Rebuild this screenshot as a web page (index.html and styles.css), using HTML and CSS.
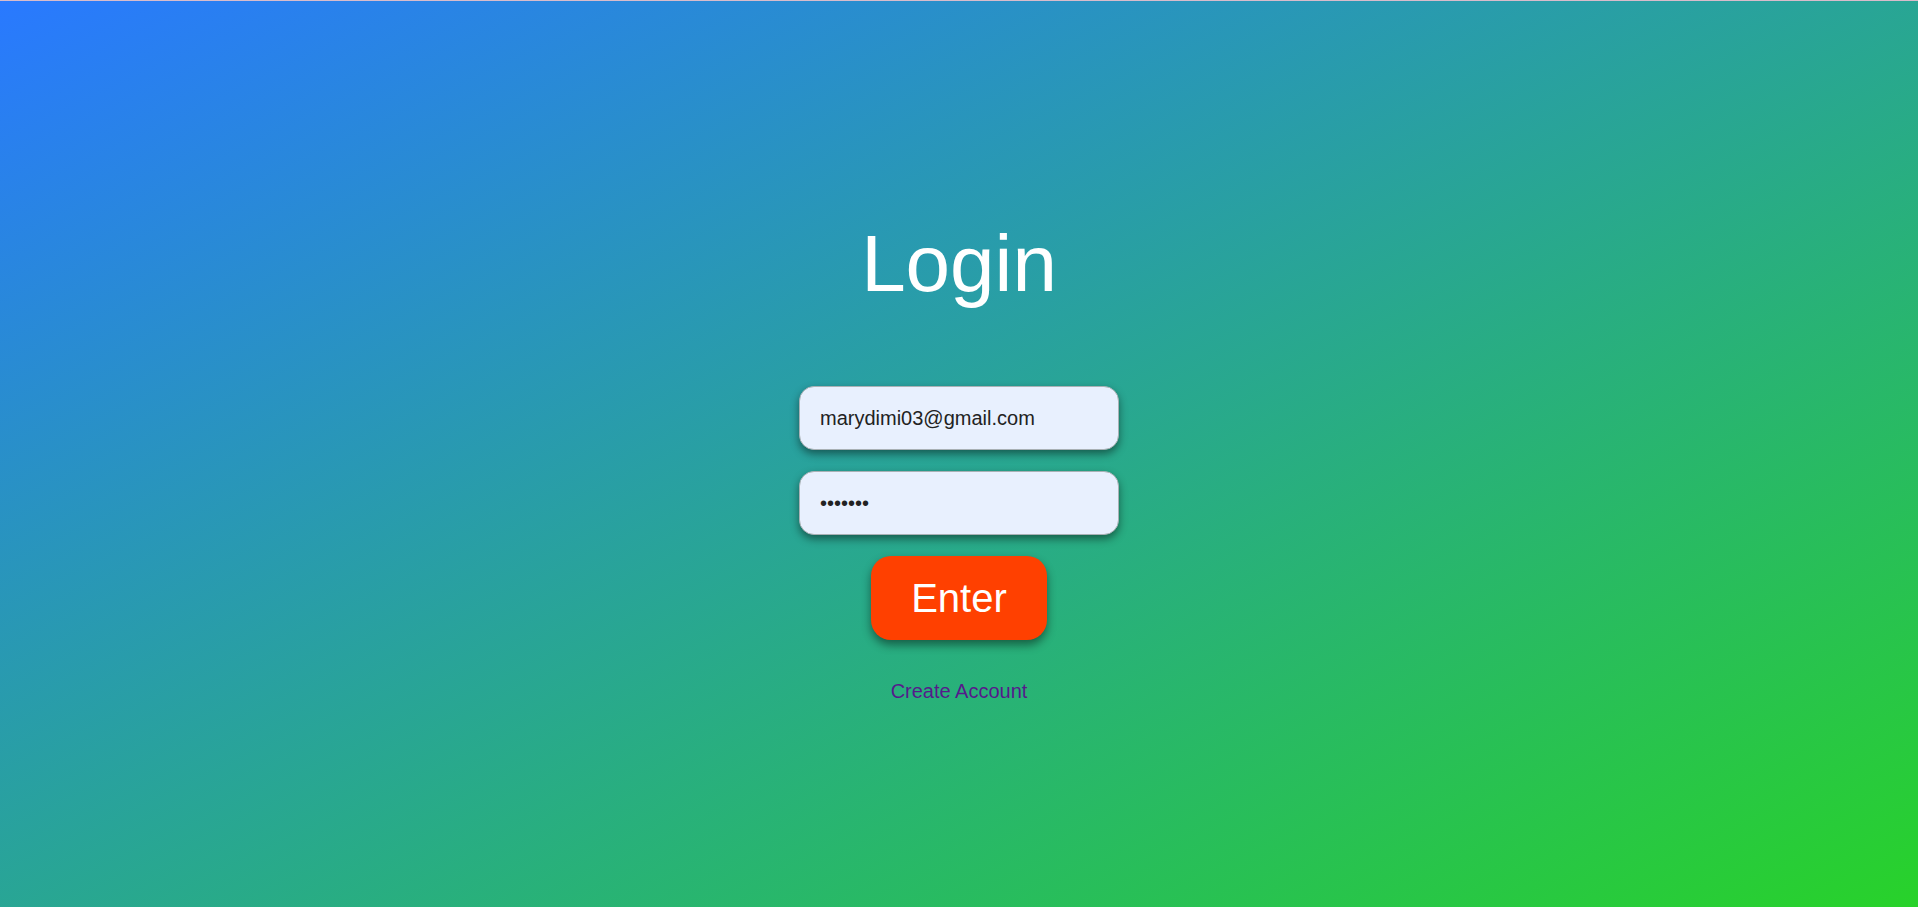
FILE: index.html
```html
<!DOCTYPE html>
<html lang="en">
<head>
<meta charset="utf-8">
<title>Login</title>
<link rel="stylesheet" href="styles.css">
</head>
<body>
<div class="page">
  <h1 class="title">Login</h1>
  <form class="form" onsubmit="return false;">
    <input class="field" type="email" value="marydimi03@gmail.com">
    <input class="field" type="password" value="1234567">
    <button class="enter" type="submit">Enter</button>
  </form>
  <a class="create" href="#">Create Account</a>
</div>
</body>
</html>
```
FILE: styles.css
```css
html, body {
  margin: 0;
  padding: 0;
}

body {
  font-family: "Liberation Sans", Arial, sans-serif;
}

.page {
  box-sizing: border-box;
  height: 100vh;
  border-top: 1px solid #d9bccb;
  padding-top: 223px;
  display: flex;
  flex-direction: column;
  align-items: center;
  background: linear-gradient(to bottom right, #2979ff, #28d22a);
}

.title {
  margin: 0 0 82px;
  font-size: 80px;
  line-height: 80px;
  font-weight: normal;
  color: #ffffff;
}

.form {
  display: flex;
  flex-direction: column;
  align-items: center;
  gap: 21px;
}

.field {
  box-sizing: border-box;
  width: 320px;
  height: 64px;
  padding: 0 20px;
  font-family: "Liberation Sans", Arial, sans-serif;
  font-size: 20px;
  color: #222222;
  background: #e8f0fe;
  border: 1px solid #a9b1b5;
  border-radius: 15px;
  box-shadow: 0 4px 8px rgba(0, 0, 0, 0.45);
  outline: none;
}

.enter {
  box-sizing: border-box;
  width: 176px;
  height: 84px;
  padding: 0;
  font-family: "Liberation Sans", Arial, sans-serif;
  font-size: 40px;
  color: #ffffff;
  background: #ff4000;
  border: none;
  border-radius: 20px;
  box-shadow: 0 5px 10px rgba(0, 0, 0, 0.45);
  cursor: pointer;
}

.create {
  margin-top: 40px;
  font-size: 20px;
  line-height: 23px;
  color: #551a8b;
  text-decoration: none;
}
```
